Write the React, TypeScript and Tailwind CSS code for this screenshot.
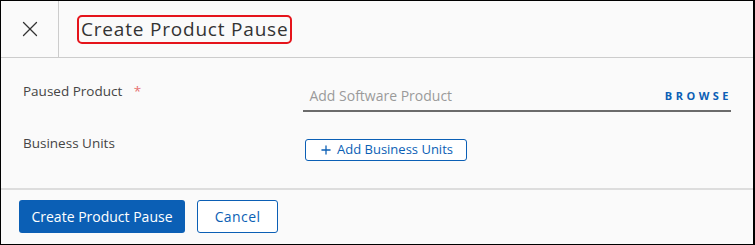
import { Plus, X } from 'lucide-react';

const font = { fontFamily: '"Open Sans", "Noto Sans", sans-serif' };

export default function App() {
  return (
    <div
      style={font}
      className="w-[755px] h-[245px] bg-[#fafafa] border-t border-l border-b border-r-2 border-black flex flex-col text-[#454545]"
    >
      {/* Header */}
      <div className="h-[57px] flex border-b border-[#cccccc] shrink-0">
        <div className="w-[58px] flex items-center justify-center border-r border-[#cccccc]">
          <X size={26} strokeWidth={1.2} className="text-[#333]" />
        </div>
        <div className="flex items-center pl-[18px]">
          <h1 className="h-[29px] border-2 border-[#e5141b] rounded-[5px] px-[2px] flex items-center text-[19px] tracking-[0.8px] leading-none text-[#333]">
            Create Product Pause
          </h1>
        </div>
      </div>

      {/* Body */}
      <div className="flex-1 px-[22px] pt-[23px] border-b-2 border-[#dddddd]">
        <div className="flex items-start">
          <div className="w-[282px] text-[13.5px] leading-[20px] text-[#454545]">
            Paused Product <span className="text-[#e77272] ml-[8px]">*</span>
          </div>
          <div className="w-[430px] flex items-center pt-[5px] pb-[4px] pl-[6px] border-b-2 border-[#6b6b6b]">
            <span className="flex-1 text-[14px] leading-[20px] text-[#9a9a9a]">
              Add Software Product
            </span>
            <span className="text-[11px] font-bold tracking-[3.5px] text-[#0b5fb5] mr-[-1px]">
              BROWSE
            </span>
          </div>
        </div>
        <div className="flex items-start mt-[21px]">
          <div className="w-[282px] text-[13.5px] leading-[20px] text-[#454545]">
            Business Units
          </div>
          <button className="mt-[6px] h-[22px] w-[162px] flex items-center justify-center gap-[4px] border border-[#0b5fb5] rounded-[3px] text-[13px] text-[#0b5fb5] bg-white">
            <Plus size={14} strokeWidth={2.2} />
            Add Business Units
          </button>
        </div>
      </div>

      {/* Footer */}
      <div className="h-[54px] shrink-0 flex items-center gap-[12px] pl-[18px] pb-[2px]">
        <button className="h-[33px] w-[166px] rounded-[3px] bg-[#0b5fb5] text-white text-[14px] font-medium">
          Create Product Pause
        </button>
        <button className="h-[33px] w-[81px] rounded-[3px] border border-[#0b5fb5] bg-white text-[#0b5fb5] text-[14px] tracking-[0.4px]">
          Cancel
        </button>
      </div>
    </div>
  );
}
